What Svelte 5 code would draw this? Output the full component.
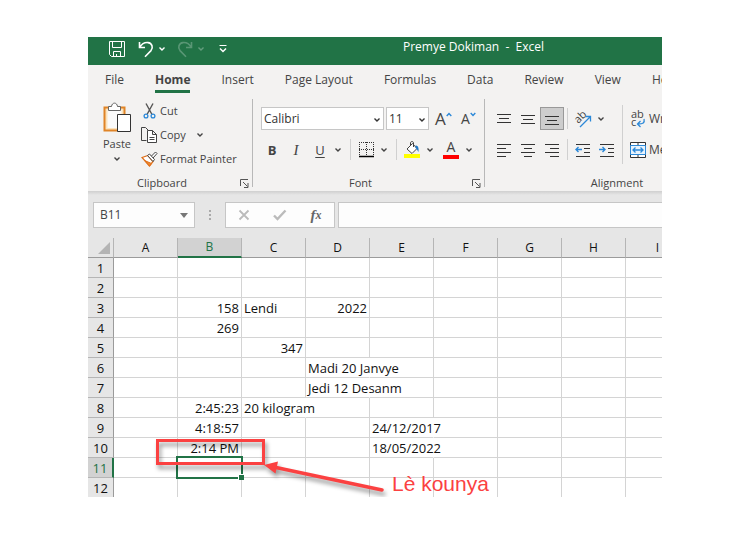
<script>
  const tabs = ['File', 'Home', 'Insert', 'Page Layout', 'Formulas', 'Data', 'Review', 'View', 'Help'];
  const columns = ['A', 'B', 'C', 'D', 'E', 'F', 'G', 'H', 'I'];
  const rows = Array.from({ length: 12 }, (_, i) => i + 1);

  const cells = {
    B3: { text: '158', right: true },
    C3: { text: 'Lendi' },
    D3: { text: '2022', right: true },
    B4: { text: '269', right: true },
    C5: { text: '347', right: true },
    D6: { text: 'Madi 20 Janvye', spill: true },
    D7: { text: 'Jedi 12 Desanm', spill: true },
    B8: { text: '2:45:23', right: true },
    C8: { text: '20 kilogram', spill: true },
    B9: { text: '4:18:57', right: true },
    E9: { text: '24/12/2017', spill: true },
    B10: { text: '2:14 PM', right: true },
    E10: { text: '18/05/2022', spill: true }
  };

  // Each entry is a list of [x1, x2, y] strokes on a 16px grid
  const lineIcons = {
    top: [[1, 15, 3], [3, 13, 7], [1, 15, 11]],
    middle: [[1, 15, 4], [3, 13, 8], [1, 15, 12]],
    bottom: [[1, 15, 5], [3, 13, 9], [1, 15, 13]],
    left: [[1, 15, 2], [1, 10, 6], [1, 15, 10], [1, 10, 14]],
    center: [[1, 15, 2], [4, 12, 6], [1, 15, 10], [4, 12, 14]],
    right: [[1, 15, 2], [6, 15, 6], [1, 15, 10], [6, 15, 14]],
    indent: [[1, 15, 2], [9, 15, 6], [9, 15, 10], [1, 15, 14]]
  };
  const vertical = ['top', 'middle', 'bottom'];
  const horizontal = ['left', 'center', 'right'];

  let active = $state('B11');
  let formula = $state('');
</script>

{#snippet chevron()}
  <svg class="chev" width="8" height="6" viewBox="0 0 8 6"><path d="M1.500 1.500 4 4 6.500 1.500" /></svg>
{/snippet}

{#snippet lines(name)}
  <svg width="16" height="16" viewBox="0 0 16 16">
    {#each lineIcons[name] as [x1, x2, y]}
      <rect x={x1} {y} width={x2 - x1} height="1" fill="#333" />
    {/each}
  </svg>
{/snippet}

{#snippet launcher(name)}
  <button class="launcher" aria-label={name}>
    <svg width="9" height="9" viewBox="0 0 9 9" fill="none" stroke="#555">
      <path d="M.5 7V.5H8M3 3l4.500 4.500M8 4v4.500H4" />
    </svg>
  </button>
{/snippet}

<main class="page">
  <div class="window">
    <header class="titlebar">
      <div class="quick">
        <button class="save" aria-label="Save">
          <svg width="16" height="16" viewBox="0 0 16 16" fill="none" stroke="#fff">
            <path d="M.5.5h15v15H2.500l-2-2zM3.500.5v6h9v-6M4.500 15.500v-5h7v5M7.500 13v2.500" />
          </svg>
        </button>
        <button class="undo" aria-label="Undo">
          <svg width="16" height="17" viewBox="0 0 16 17" fill="none" stroke="#fff" stroke-width="1.600">
            <path d="M1.500 1v5.500H7M1.700 6.300C4 2.500 7 1.300 10 1.600c4 .4 5.600 5 3 8L7 15.800" />
          </svg>
        </button>
        <button class="drop" aria-label="Undo history">{@render chevron()}</button>
        <button class="redo" aria-label="Redo">
          <svg width="16" height="17" viewBox="0 0 16 17" fill="none" stroke="#fff" stroke-width="1.600">
            <path d="M14.500 1v5.500H9M14.300 6.300C12 2.500 9 1.300 6 1.600c-4 .4-5.600 5-3 8L9 15.800" />
          </svg>
        </button>
        <button class="drop dim" aria-label="Redo history">{@render chevron()}</button>
        <button class="custom" aria-label="Customize Quick Access Toolbar">
          <svg width="8" height="8" viewBox="0 0 8 8" fill="none" stroke="#fff">
            <path d="M.5.500h7" /><path d="M1 3.500 4 6.500 7 3.500" stroke-width="1.500" />
          </svg>
        </button>
      </div>
      <h1>Premye Dokiman&nbsp; -&nbsp; Excel</h1>
    </header>

    <nav class="tabs">
      {#each tabs as tab}
        <button class:current={tab === 'Home'}>{tab}</button>
      {/each}
    </nav>

    <div class="ribbon">
      <section class="group clipboard">
        <div class="body">
          <button class="paste">
            <svg width="28" height="31" viewBox="0 0 28 31" fill="none">
              <path d="M1.500 5.500h20v23h-20z" fill="#fbe3bd" stroke="#e08427" stroke-width="2" />
              <path d="M4.500 8h14v18h-14z" fill="#fafafa" />
              <path d="M5.500 8.500v-4h3c.5-4.500 5.500-4.500 6 0h3v4z" fill="#fff" stroke="#666" />
              <path d="M14.500 12.500h13v17h-13z" fill="#fff" stroke="#333" />
            </svg>
            <span>Paste</span>
            {@render chevron()}
          </button>
          <div class="actions">
            <button>
              <svg width="17" height="16" viewBox="0 0 17 16" fill="none">
                <path d="M5 .5 11 11.500M12 .5 6 11.500" stroke="#555" stroke-width="1.400" />
                <circle cx="5" cy="13" r="1.900" stroke="#2b88d8" stroke-width="1.300" />
                <circle cx="12" cy="13" r="1.900" stroke="#2b88d8" stroke-width="1.300" />
              </svg>
              Cut
            </button>
            <button>
              <svg width="17" height="16" viewBox="0 0 17 16" fill="none" stroke="#444">
                <path d="M5.500 13.500h-5V.5h4l3 3" />
                <path d="M6.500 3.500h5l4 4v8h-9zM11.500 3.500v4h4M8.500 10.500h5M8.500 12.500h5" fill="#fff" />
              </svg>
              Copy
              <span class="gap">{@render chevron()}</span>
            </button>
            <button>
              <svg width="17" height="16" viewBox="0 0 17 16" fill="none">
                <path d="M1 6.500 7 4.500l5 6L8.500 15z" fill="#fff" stroke="#e0701a" stroke-width="1.300" />
                <path d="M3.500 9.500 10.500 12.500 8.500 15z" fill="#ee8a33" stroke="#e0701a" />
                <path d="m6.500 4.500 2-1.500 5 5.500-1.500 2zM10.500 5l4-4 1.500 1.500-4 4.500" fill="#fff" stroke="#444" />
              </svg>
              Format Painter
            </button>
          </div>
        </div>
        <footer><span>Clipboard</span>{@render launcher('Clipboard settings')}</footer>
      </section>
      <span class="divider"></span>

      <section class="group font">
        <div class="body stack">
          <div class="row fields">
            <label class="pick family">
              <select aria-label="Font"><option>Calibri</option></select>
              {@render chevron()}
            </label>
            <label class="pick size">
              <select aria-label="Font size"><option>11</option></select>
              {@render chevron()}
            </label>
            <button class="grow" aria-label="Increase font size">
              <span>A</span>
              <svg width="6" height="5" viewBox="0 0 6 5"><path d="M.7 4 3 1.500 5.300 4" /></svg>
            </button>
            <button class="grow small" aria-label="Decrease font size">
              <span>A</span>
              <svg width="6" height="5" viewBox="0 0 6 5"><path d="M.7 1 3 3.500 5.300 1" /></svg>
            </button>
          </div>
          <div class="row format">
            <button class="tool"><b>B</b></button>
            <button class="tool"><i>I</i></button>
            <button class="tool"><u>U</u></button>
            <button class="drop" aria-label="Underline styles">{@render chevron()}</button>
            <span class="rule"></span>
            <button class="tool" aria-label="Borders">
              <svg width="15" height="16" viewBox="0 0 15 16" fill="none" stroke="#333">
                <path d="M0 .5h15M0 7.500h15M.5 0v14M7.500 0v14M14.500 0v14" stroke-dasharray="1 1" />
                <path d="M0 14.500h15" stroke="#000" stroke-width="1.500" />
              </svg>
            </button>
            <button class="drop" aria-label="Border styles">{@render chevron()}</button>
            <span class="rule"></span>
            <button class="tool" aria-label="Fill color">
              <svg width="16" height="17" viewBox="0 0 16 17" fill="none">
                <path d="M3 8 8.500 2.500 13 7.500 8 12.500z" fill="#fff" stroke="#444" />
                <path d="M6.500 4.500V2c0-2 3-2 3 0v4" stroke="#444" />
                <path d="M11.500 4.500c2.500 0 3.500 2 3 6.500-1-1.500-1.500-3-3-4z" fill="#1e78c8" />
                <path d="M0 13h16v4H0z" fill="#ff0" />
              </svg>
            </button>
            <button class="drop" aria-label="Fill colors">{@render chevron()}</button>
            <button class="tool color" aria-label="Font color"><span>A</span></button>
            <button class="drop" aria-label="Font colors">{@render chevron()}</button>
          </div>
        </div>
        <footer><span>Font</span>{@render launcher('Font settings')}</footer>
      </section>
      <span class="divider"></span>

      <section class="group alignment">
        <div class="body">
          <div class="stack">
            <div class="row">
              {#each vertical as name}
                <button class="tool" class:pressed={name === 'bottom'} aria-label="Align {name}">{@render lines(name)}</button>
              {/each}
              <span class="rule even"></span>
              <button class="tool" aria-label="Orientation">
                <svg width="18" height="18" viewBox="0 0 18 18" fill="none">
                  <text x="1" y="12" transform="rotate(-45 5 9)" font-size="11" fill="#444">ab</text>
                  <path d="M6 17 16 7M11.500 6.500H16.500V11.500" stroke="#2b88d8" stroke-width="1.300" />
                </svg>
              </button>
              <button class="drop" aria-label="Orientation options">{@render chevron()}</button>
            </div>
            <div class="row">
              {#each horizontal as name}
                <button class="tool" aria-label="Align {name}">{@render lines(name)}</button>
              {/each}
              <span class="rule even"></span>
              <button class="tool indent" aria-label="Decrease indent">
                {@render lines('indent')}
                <svg class="arrow" width="7" height="7" viewBox="0 0 7 7"><path d="M7 3.500H1M3.500 1 1 3.500 3.500 6" /></svg>
              </button>
              <button class="tool indent" aria-label="Increase indent">
                {@render lines('indent')}
                <svg class="arrow" width="7" height="7" viewBox="0 0 7 7"><path d="M0 3.500h6M3.500 1 6 3.500 3.500 6" /></svg>
              </button>
            </div>
          </div>
          <span class="rule tall"></span>
          <div class="stack wide">
            <button class="row">
              <svg width="16" height="18" viewBox="0 0 16 18" fill="none">
                <text x="1" y="8" font-size="11" fill="#444">ab</text>
                <text x="1" y="16" font-size="11" fill="#444">c</text>
                <path d="M14 9c1 4-1 5-6 5M10.500 11 7.500 14l3 3" stroke="#2b88d8" stroke-width="1.300" />
              </svg>
              Wrap Text
            </button>
            <button class="row">
              <svg width="16" height="16" viewBox="0 0 16 16" fill="none">
                <path d="M.5.500h15v15H.5zM8 0v4M8 12v4" fill="#fff" stroke="#333" />
                <path d="M.5 3.500h15v9H.5z" fill="#e8f3fc" stroke="#2b88d8" />
                <path d="M3 8h10M5.500 5.500 3 8l2.500 2.500M10.500 5.500 13 8l-2.500 2.500" stroke="#2b88d8" stroke-width="1.300" />
              </svg>
              Merge &amp; Center
            </button>
          </div>
        </div>
        <footer><span>Alignment</span></footer>
      </section>
    </div>

    <div class="formulabar">
      <label class="namebox">
        <input aria-label="Name box" bind:value={active} />
        <svg width="8" height="5" viewBox="0 0 8 5"><path d="M0 0h8L4 5z" fill="#777" /></svg>
      </label>
      <span class="dots"><i></i><i></i><i></i></span>
      <div class="entry">
        <button aria-label="Cancel">
          <svg width="12" height="12" viewBox="0 0 12 12" fill="none" stroke="#bbb" stroke-width="1.800"><path d="m1.500 1.500 9 9M10.500 1.500l-9 9" /></svg>
        </button>
        <button aria-label="Enter">
          <svg width="14" height="12" viewBox="0 0 14 12" fill="none" stroke="#bbb" stroke-width="2.400"><path d="M1 6.500 4.500 10 12.500 1.500" /></svg>
        </button>
        <button class="fx" aria-label="Insert function">f<sub>x</sub></button>
      </div>
      <input class="formula" aria-label="Formula bar" bind:value={formula} />
    </div>

    <div class="sheet">
      <table>
        <thead>
          <tr>
            <th class="corner"><svg width="12" height="12" viewBox="0 0 12 12"><path d="M12 0v12H0z" fill="#b4b4b4" /></svg></th>
            {#each columns as col}
              <th class:selected={col === 'B'}>{col}</th>
            {/each}
          </tr>
        </thead>
        <tbody>
          {#each rows as row}
            <tr>
              <th class:selected={row === 11}>{row}</th>
              {#each columns as col}
                {@const cell = cells[col + row]}
                <td class:right={cell?.right} class:spill={cell?.spill} class:active={col + row === 'B11'}>{cell?.text ?? ''}</td>
              {/each}
            </tr>
          {/each}
        </tbody>
      </table>

      <div class="note">
        <svg width="240" height="70" viewBox="0 0 240 70" fill="none">
          <rect x="5.500" y="4.500" width="106" height="23" stroke="#fb4141" stroke-width="3" />
          <path d="M124 31.500 230 54" stroke="#fb4141" stroke-width="3.500" stroke-linecap="round" />
          <path d="M112 29 126 25.500 123.500 37.500z" fill="#fb4141" />
        </svg>
        <span>Lè kounya</span>
      </div>
    </div>
  </div>
</main>

<style>
  :global(body) {
    margin: 0;
    background: #fff;
  }

  .page {
    padding: 37px 83px 45px 88px;
    font: 12px/16px 'Open Sans', 'Noto Sans', sans-serif;
    color: #444;
  }

  .window {
    overflow: hidden;
    background: #f3f2f1;
  }

  button,
  input,
  select {
    margin: 0;
    padding: 0;
    border: 0;
    border-radius: 0;
    background: none;
    font: inherit;
    color: inherit;
    outline: 0;
  }

  svg {
    display: block;
    flex: none;
  }

  svg text {
    font-family: 'Open Sans', sans-serif;
  }

  .chev path {
    fill: none;
    stroke: currentColor;
    stroke-width: 1.4;
  }

  /* Title bar */
  .titlebar {
    display: flex;
    height: 28px;
    background: #217346;
    color: #fff;
  }

  .quick {
    display: flex;
    flex: none;
    align-items: center;
    box-sizing: border-box;
    width: 197px;
    padding: 0 0 4px 21px;
  }

  .quick .undo {
    margin-left: 13px;
  }

  .quick .redo {
    margin-left: 9px;
    opacity: 0.25;
  }

  .quick .dim {
    opacity: 0.3;
  }

  .quick .custom {
    margin-left: 12px;
  }

  .drop {
    display: flex;
    align-items: center;
    justify-content: center;
    width: 12px;
    height: 23px;
    flex: none;
  }

  .quick .drop {
    margin-left: 2px;
  }

  h1 {
    flex: 1;
    margin: 0;
    padding-top: 2px;
    font-size: 12px;
    font-weight: 400;
    line-height: 16px;
    text-align: center;
    white-space: nowrap;
  }

  /* Tabs */
  .tabs {
    display: flex;
    gap: 31px;
    height: 32px;
    padding-left: 17px;
  }

  .tabs button {
    height: 28px;
    padding-top: 4px;
    border-bottom: 3px solid transparent;
    box-sizing: border-box;
    white-space: nowrap;
  }

  .tabs .current {
    border-color: #217346;
    font-weight: 700;
  }

  /* Ribbon */
  .ribbon {
    display: flex;
    padding-top: 2px;
    font-size: 11px;
  }

  .divider {
    flex: none;
    width: 1px;
    margin-bottom: 4px;
    background: #b8b8b8;
  }

  .group {
    display: flex;
    flex: none;
    flex-direction: column;
  }

  .body {
    display: flex;
    height: 76px;
  }

  .group footer {
    display: flex;
    justify-content: center;
    position: relative;
    height: 16px;
  }

  .launcher {
    position: absolute;
    right: 3px;
    top: 4px;
  }

  .clipboard {
    width: 164px;
  }

  .clipboard footer {
    padding-right: 16px;
  }

  .paste {
    display: flex;
    flex-direction: column;
    align-items: center;
    width: 48px;
    padding: 3px 0 0 10px;
  }

  .paste span {
    margin: 3px 0 4px;
  }

  .actions {
    display: flex;
    flex-direction: column;
    padding-left: 5px;
  }

  .actions button {
    display: flex;
    align-items: center;
    gap: 2px;
    height: 24px;
    white-space: nowrap;
  }

  .actions .gap {
    padding-left: 8px;
  }

  .stack {
    display: flex;
    flex-direction: column;
    gap: 8px;
    padding-top: 8px;
  }

  .body.stack {
    box-sizing: border-box;
  }

  .row {
    display: flex;
    align-items: center;
    height: 23px;
  }

  .font {
    width: 231px;
  }

  .font footer {
    padding-right: 16px;
  }

  .font .stack {
    padding-left: 7px;
  }

  .fields {
    gap: 2px;
    padding-left: 1px;
  }

  .pick {
    position: relative;
    display: flex;
    box-sizing: border-box;
    height: 23px;
    border: 1px solid #c6c6c6;
    background: #fff;
    font-size: 12px;
    color: #333;
  }

  .pick select {
    appearance: none;
    width: 100%;
    padding-left: 2px;
  }

  .pick .chev {
    position: absolute;
    right: 2px;
    top: 9px;
    pointer-events: none;
  }

  .family {
    width: 123px;
  }

  .size {
    width: 43px;
  }

  .grow {
    display: flex;
    width: 22px;
    margin-left: 4px;
    font-size: 17px;
    line-height: 20px;
  }

  .grow svg {
    margin-top: 3px;
  }

  .grow.small {
    margin-left: 2px;
    font-size: 14px;
  }

  .grow path,
  .arrow path {
    fill: none;
    stroke: #2b88d8;
    stroke-width: 1.4;
  }

  .tool {
    display: flex;
    align-items: center;
    justify-content: center;
    flex: none;
    width: 24px;
    height: 23px;
    font-size: 13px;
  }

  .tool i {
    font-family: 'Liberation Serif', serif;
    font-size: 15px;
  }

  .tool u {
    text-underline-offset: 2px;
  }

  .rule {
    flex: none;
    width: 1px;
    height: 21px;
    margin: 0 3px 0 6px;
    background: #d0d0d0;
  }

  .rule.even {
    margin: 0 3px;
  }

  .rule.tall {
    height: 59px;
    margin: 6px 3px 0;
  }

  .color {
    margin-left: 3px;
  }

  .color span {
    width: 16px;
    height: 14px;
    border-bottom: 4px solid #f00;
    font-size: 14px;
    line-height: 12px;
  }

  .alignment {
    width: 264px;
  }

  .alignment .body {
    padding-left: 7px;
  }

  .pressed {
    box-sizing: border-box;
    border: 1px solid #999;
    background: #cdcdcd;
  }

  .indent {
    position: relative;
  }

  .arrow {
    position: absolute;
    left: 4px;
    top: 8px;
  }

  .wide {
    padding-left: 4px;
  }

  .wide .row {
    gap: 3px;
    font-size: 12px;
    white-space: nowrap;
  }

  /* Formula bar */
  .formulabar {
    display: flex;
    height: 26px;
    padding: 11px 0 10px 5px;
    background: linear-gradient(#cfcfcf, #e6e6e6 4px);
  }

  .namebox,
  .entry,
  .formula {
    box-sizing: border-box;
    border: 1px solid #c6c6c6;
    background: #fdfdfd;
  }

  .namebox {
    display: flex;
    align-items: center;
    width: 102px;
    padding: 0 6px;
  }

  .namebox input {
    flex: 1;
    min-width: 0;
  }

  .dots {
    display: flex;
    flex-direction: column;
    justify-content: center;
    align-items: center;
    gap: 2px;
    width: 30px;
  }

  .dots i {
    width: 2px;
    height: 2px;
    background: #aaa;
  }

  .entry {
    display: flex;
    flex: none;
    width: 110px;
    margin-right: 3px;
  }

  .entry button {
    display: flex;
    flex: 1;
    align-items: center;
    justify-content: center;
  }

  .entry .fx {
    font: italic 700 15px/20px 'Liberation Serif', serif;
    color: #666;
  }

  .fx sub {
    font-size: 12px;
    line-height: 12px;
  }

  .formula {
    flex: 1;
    min-width: 0;
    border-right: 0;
    padding: 0 6px;
  }

  /* Sheet */
  .sheet {
    position: relative;
    height: 259px;
    background: #fff;
  }

  table {
    width: 602px;
    table-layout: fixed;
    border-spacing: 0;
    font-size: 13px;
    color: #111;
  }

  th,
  td {
    box-sizing: border-box;
    height: 20px;
    padding: 0 2px;
    border: solid #d4d4d4;
    border-width: 0 1px 1px 0;
    font-weight: 400;
    line-height: 18px;
    text-align: left;
    white-space: nowrap;
  }

  th {
    padding: 0;
    background: #e6e6e6;
    text-align: center;
    font-size: 12px;
  }

  thead th {
    border-color: #9b9b9b;
    border-right-color: #b5b5b5;
  }

  tbody th {
    border-right-color: #9b9b9b;
    border-bottom-color: #b5b5b5;
    font-size: 13px;
  }

  .corner {
    width: 26px;
  }

  .corner svg {
    margin: 0 3px 0 auto;
  }

  th.selected {
    background: #d2d2d2;
    color: #217346;
  }

  thead .selected {
    border-bottom: 2px solid #217346;
  }

  tbody .selected {
    border-right: 2px solid #217346;
  }

  .right {
    text-align: right;
  }

  .spill {
    border-right-color: transparent;
  }

  .active {
    position: relative;
  }

  .active::before {
    content: '';
    position: absolute;
    inset: -2px;
    border: 2px solid #217346;
  }

  .active::after {
    content: '';
    position: absolute;
    right: -3px;
    bottom: -3px;
    width: 5px;
    height: 5px;
    border: solid #fff;
    border-width: 1px 0 0 1px;
    background: #217346;
  }

  .note {
    position: absolute;
    left: 64px;
    top: 198px;
    display: flex;
    font: 21px/24px 'Liberation Sans', Arial, sans-serif;
    color: #fb4141;
  }

  .note svg {
    filter: drop-shadow(2px 4px 2px rgba(0, 0, 0, 0.4));
  }

  .note span {
    padding-top: 36px;
    white-space: nowrap;
  }
</style>
